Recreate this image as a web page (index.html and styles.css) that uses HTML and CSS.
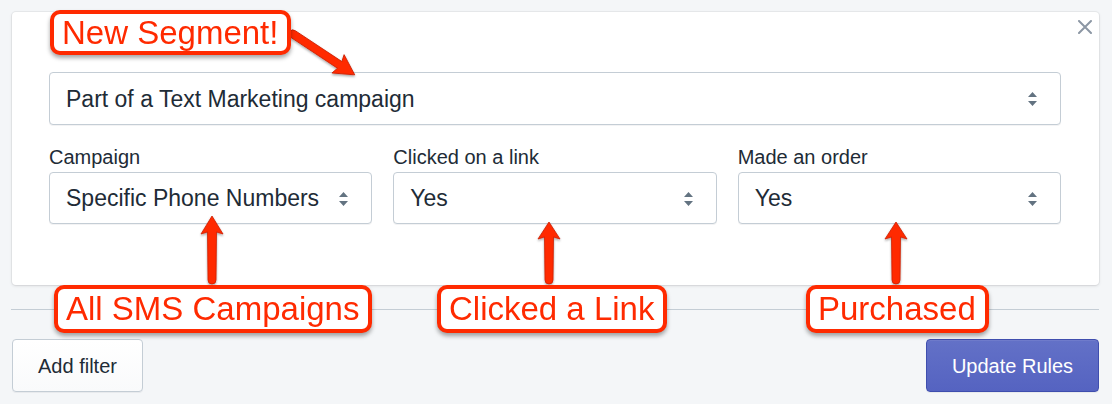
FILE: index.html
```html
<!DOCTYPE html>
<html lang="en">
<head>
<meta charset="utf-8">
<title>Segment rules</title>
<link rel="stylesheet" href="styles.css">
</head>
<body>
<div class="page">
  <section class="card">
    <button class="close" aria-label="Close">
      <svg width="14" height="14" viewBox="0 0 14 14"><path d="M1 1 L13 13 M13 1 L1 13" stroke="#8c97a4" stroke-width="2" stroke-linecap="round"/></svg>
    </button>
    <div class="select">
      <span class="value">Part of a Text Marketing campaign</span>
      <svg class="chev" width="9" height="14" viewBox="0 0 9 14"><path d="M4.5 0 L9 5 L0 5 Z M0 9 L9 9 L4.5 14 Z" fill="#637381"/></svg>
    </div>
    <div class="row">
      <div class="field">
        <div class="label">Campaign</div>
        <div class="select">
          <span class="value">Specific Phone Numbers</span>
          <svg class="chev" width="9" height="14" viewBox="0 0 9 14"><path d="M4.5 0 L9 5 L0 5 Z M0 9 L9 9 L4.5 14 Z" fill="#637381"/></svg>
        </div>
      </div>
      <div class="field">
        <div class="label">Clicked on a link</div>
        <div class="select">
          <span class="value">Yes</span>
          <svg class="chev" width="9" height="14" viewBox="0 0 9 14"><path d="M4.5 0 L9 5 L0 5 Z M0 9 L9 9 L4.5 14 Z" fill="#637381"/></svg>
        </div>
      </div>
      <div class="field">
        <div class="label">Made an order</div>
        <div class="select">
          <span class="value">Yes</span>
          <svg class="chev" width="9" height="14" viewBox="0 0 9 14"><path d="M4.5 0 L9 5 L0 5 Z M0 9 L9 9 L4.5 14 Z" fill="#637381"/></svg>
        </div>
      </div>
    </div>
  </section>
  <div class="divider"></div>
  <div class="actions">
    <button class="btn">Add filter</button>
    <button class="btn primary">Update Rules</button>
  </div>

  <svg class="arrows" width="1112" height="404" viewBox="0 0 1112 404">
    <defs>
      <filter id="sh" x="-30%" y="-30%" width="160%" height="160%">
        <feDropShadow dx="0" dy="1.5" stdDeviation="1.2" flood-color="#000" flood-opacity="0.35"/>
      </filter>
    </defs>
    <g fill="#ff2a00" stroke="#cc2000" stroke-width="0.8" filter="url(#sh)">
      <path transform="translate(293,34) rotate(33.5)" d="M0,-4 L56,-4 L54,-11 L74,0 L54,11 L56,4 L0,4 Q-4,4 -4,0 Q-4,-4 0,-4 Z"/>
      <path d="M212,216 L223,234 L216.5,232 L216,280 Q216,284 212,284 Q208,284 208,280 L207.5,232 L201,234 Z"/>
      <path d="M549,222 L560,239 L553.5,237 L553,280 Q553,284 549,284 Q545,284 545,280 L544.5,237 L538,239 Z"/>
      <path d="M896,222 L907,239 L900.5,237 L900,280 Q900,284 896,284 Q892,284 892,280 L891.5,237 L885,239 Z"/>
    </g>
  </svg>

  <div class="callout c-new">New Segment!</div>
  <div class="callout c-sms">All SMS Campaigns</div>
  <div class="callout c-link">Clicked a Link</div>
  <div class="callout c-buy">Purchased</div>
</div>
</body>
</html>
```

FILE: styles.css
```css
* { box-sizing: border-box; }

html, body {
  margin: 0;
  padding: 0;
  background: #f4f6f8;
}

body {
  font-family: "Liberation Sans", Arial, Helvetica, sans-serif;
  color: #212b36;
}

.page {
  position: relative;
  width: 1112px;
  height: 404px;
  padding: 12px 13px 12px 12px;
  overflow: hidden;
}

.card {
  position: relative;
  background: #ffffff;
  border-radius: 4px;
  box-shadow: 0 0 0 1px rgba(63, 63, 68, 0.06), 0 1px 3px 0 rgba(63, 63, 68, 0.15);
  padding: 60px 38px 61px 37px;
  height: 273px;
}

.close {
  position: absolute;
  top: 5px;
  right: 4px;
  width: 20px;
  height: 20px;
  padding: 3px;
  border: 0;
  background: transparent;
  display: flex;
  align-items: center;
  justify-content: center;
}

.select {
  display: flex;
  align-items: center;
  justify-content: space-between;
  height: 53px;
  padding: 1px 23px 0 16px;
  border: 1px solid #c4cdd5;
  border-radius: 4px;
  background: #ffffff;
  box-shadow: 0 1px 0 rgba(22, 29, 37, 0.05);
  font-size: 23px;
  color: #212b36;
}

.row {
  display: grid;
  grid-template-columns: 1fr 1fr 1fr;
  column-gap: 21px;
  margin-top: 20px;
}

.row .select {
  height: 52px;
}

.label {
  font-size: 20px;
  line-height: 24px;
  margin-bottom: 3px;
  color: #212b36;
}

.chev { flex: none; }

.divider {
  height: 1px;
  background: #c4cdd5;
  margin: 24px 0 29px -1px;
}

.actions {
  display: flex;
  justify-content: space-between;
}

.btn {
  height: 53px;
  border: 1px solid #c4cdd5;
  border-radius: 4px;
  background: linear-gradient(#ffffff, #f9fafb);
  box-shadow: 0 1px 0 rgba(22, 29, 37, 0.05);
  font-family: "Liberation Sans", Arial, sans-serif;
  font-size: 20px;
  color: #212b36;
  padding: 2px 24px 0;
  width: 131px;
}

.btn.primary {
  width: 173px;
  background: linear-gradient(#6371c7, #5563c1);
  border-color: #3f4eae;
  color: #ffffff;
  box-shadow: inset 0 1px 0 0 #6f7bcb, 0 1px 0 rgba(22, 29, 37, 0.05);
}

.arrows {
  position: absolute;
  left: 0;
  top: 0;
  pointer-events: none;
}

.callout {
  position: absolute;
  background: #ffffff;
  border: 4px solid #ff2a00;
  border-radius: 10px;
  color: #ff2a00;
  font-family: "Liberation Sans", Arial, Helvetica, sans-serif;
  font-size: 33px;
  line-height: 40px;
  padding: 0 9px 0 8px;
  white-space: nowrap;
  box-shadow: 0 3px 4px rgba(0, 0, 0, 0.35);
}

.c-new {
  left: 50px;
  top: 10px;
  line-height: 37px;
}

.c-sms {
  left: 54px;
  top: 285px;
}

.c-link {
  left: 437px;
  top: 285px;
}

.c-buy {
  left: 806px;
  top: 285px;
}
```
